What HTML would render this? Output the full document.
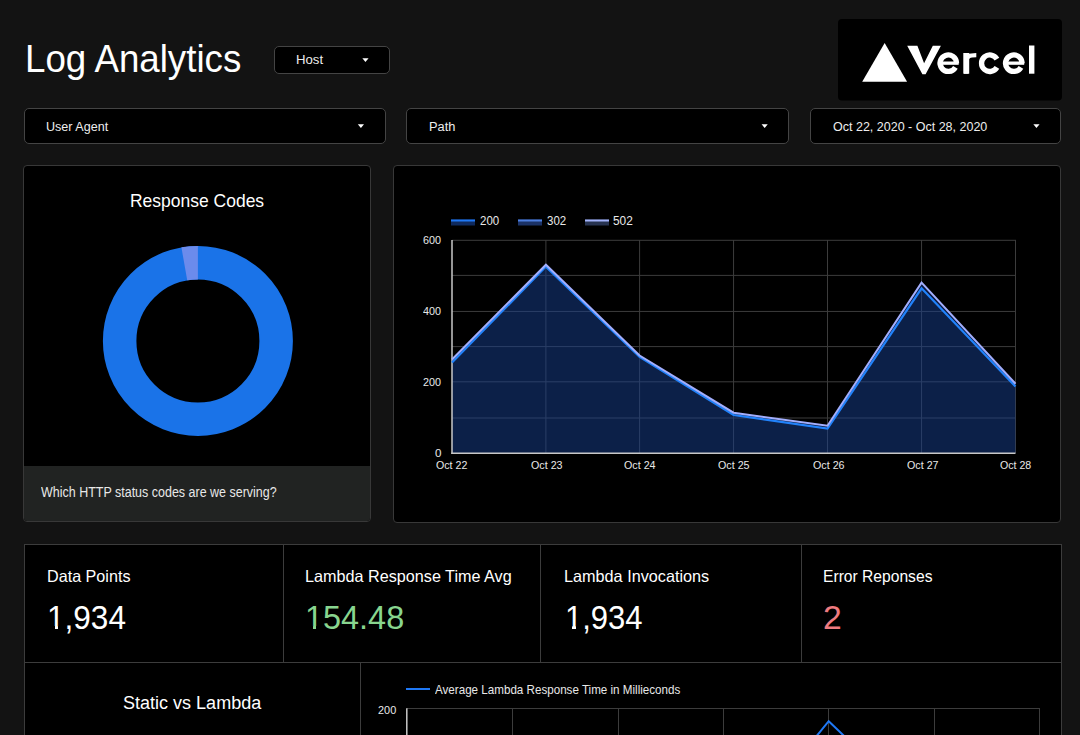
<!DOCTYPE html>
<html><head><meta charset="utf-8">
<style>
html,body{margin:0;padding:0;}
body{width:1080px;height:735px;overflow:hidden;background:#131313;position:relative;font-family:"Liberation Sans",sans-serif;color:#fff;}
.a{position:absolute;}
.t{position:absolute;white-space:nowrap;line-height:1;}
.box{position:absolute;background:#000;border:1px solid #383838;border-radius:4px;box-sizing:border-box;}
.dd{position:absolute;background:#000;border:1px solid #444;border-radius:5px;box-sizing:border-box;}
.ln{position:absolute;background:#3c3c3c;}
.arr{position:absolute;width:0;height:0;border-left:3px solid transparent;border-right:3px solid transparent;border-top:3.5px solid #fff;}
</style></head><body>
<div class="dd" style="left:274px;top:46px;width:116px;height:28px;"></div>
<svg class="a" style="left:0;top:0" width="1080" height="120" viewBox="0 0 1080 120">
<rect x="838" y="19" width="224" height="81.5" rx="4" fill="#000"/>
<polygon points="862.2,81.8 907.1,81.8 884.65,42.9" fill="#fff"/>
<polygon points="907.2,45.7 917.4,45.7 924.1,63.2 932.8,45.7 940.9,45.7 925.6,74.2 922.4,74.2" fill="#fff"/>
<g fill="none" stroke="#fff" stroke-width="5.3">
<path d="M956.55,63.20 A8.25,8.25 0 1 0 955.44,67.33"/>
<path d="M996.94,59.08 A8.25,8.25 0 1 0 996.94,67.33"/>
<path d="M1022.05,63.20 A8.25,8.25 0 1 0 1020.94,67.33"/>
<path d="M966.2,73.7 V62 C966.2,56 969.5,55.1 976.3,55.1" stroke-width="4.4"/>
</g>
<rect x="963.3" y="53" width="5.9" height="20.7" fill="#fff"/>
<rect x="937.9" y="61.5" width="20.8" height="3.3" fill="#fff"/>
<rect x="1003.4" y="61.5" width="20.8" height="3.3" fill="#fff"/>
<rect x="1029" y="45.5" width="5.4" height="28.2" fill="#fff"/>
</svg>
<div class="dd" style="left:24px;top:108px;width:362px;height:36px;"></div>
<div class="dd" style="left:406px;top:108px;width:383px;height:36px;"></div>
<div class="dd" style="left:810px;top:108px;width:251px;height:36px;"></div>
<svg class="a" style="left:0;top:0" width="1080" height="150"><polygon points="362.34999999999997,58.2 368.55,58.2 365.45,61.900000000000006" fill="#fff"/><polygon points="357.79999999999995,124.2 364.0,124.2 360.9,127.9" fill="#fff"/><polygon points="761.55,124.2 767.75,124.2 764.65,127.9" fill="#fff"/><polygon points="1033.3500000000001,124.2 1039.55,124.2 1036.45,127.9" fill="#fff"/></svg>
<div class="box" style="left:23px;top:165px;width:348px;height:357px;overflow:hidden;">
  <div class="a" style="left:0;top:300px;width:100%;height:60px;background:#212322;"></div>
</div>
<div class="box" style="left:393px;top:165px;width:668px;height:358px;"></div>
<div class="a" style="left:24px;top:544px;width:1038px;height:200px;background:#000;border:1px solid #3c3c3c;box-sizing:border-box;"></div>
<div class="ln" style="left:24px;top:662px;width:1038px;height:1px;"></div>
<div class="ln" style="left:283px;top:544px;width:1px;height:118px;"></div>
<div class="ln" style="left:540px;top:544px;width:1px;height:118px;"></div>
<div class="ln" style="left:801px;top:544px;width:1px;height:118px;"></div>
<div class="ln" style="left:360px;top:662px;width:1px;height:80px;"></div>
<svg class="a" style="left:0;top:0" width="1080" height="735" viewBox="0 0 1080 735">
<g stroke="#3c3c3c" stroke-width="1" fill="none"><line x1="452" y1="240.3" x2="1016" y2="240.3"/><line x1="452" y1="275.4" x2="1016" y2="275.4"/><line x1="452" y1="311.45" x2="1016" y2="311.45"/><line x1="452" y1="346.6" x2="1016" y2="346.6"/><line x1="452" y1="381.8" x2="1016" y2="381.8"/><line x1="452" y1="418.0" x2="1016" y2="418.0"/><line x1="545.9" y1="240" x2="545.9" y2="453"/><line x1="639.6" y1="240" x2="639.6" y2="453"/><line x1="733.55" y1="240" x2="733.55" y2="453"/><line x1="827.5" y1="240" x2="827.5" y2="453"/><line x1="921.55" y1="240" x2="921.55" y2="453"/><line x1="1015.5" y1="240" x2="1015.5" y2="453"/></g>
<polygon points="452,359.5 545.9,264.7 639.6,355.5 733.55,412.7 827.5,425.7 921.55,282.6 1015.5,383.8 1015.5,386.5 921.55,288.3 827.5,428.5 733.55,415 639.6,357 545.9,266.6 452,362.5" fill="#0a1a42" fill-opacity="0.9"/>
<polygon points="452,453 452,362.5 545.9,266.6 639.6,357 733.55,415 827.5,428.5 921.55,288.3 1015.5,386.5 1015.5,453" fill="rgb(24,64,144)" fill-opacity="0.5"/>
<g stroke="#c8c8c8" stroke-width="1.5" fill="none"><line x1="452" y1="240" x2="452" y2="454"/><line x1="451.25" y1="453.2" x2="1015.5" y2="453.2"/></g>
<polyline points="452,362.5 545.9,266.6 639.6,357 733.55,415 827.5,428.5 921.55,288.3 1015.5,386.5" fill="none" stroke="#2182fa" stroke-width="2.2"/>
<polyline points="452,359.5 545.9,264.7 639.6,355.5 733.55,412.7 827.5,425.7 921.55,282.6 1015.5,383.8" fill="none" stroke="#a2aefd" stroke-width="2"/>
<rect x="451" y="219.5" width="24" height="6" fill="#0f2a5e"/><rect x="451" y="219.5" width="24" height="2" fill="#1f78f5"/>
<rect x="518" y="219.5" width="24" height="6" fill="#1b3266"/><rect x="518" y="219.5" width="24" height="2" fill="#4d7fe0"/>
<rect x="585" y="219.5" width="24" height="6" fill="#273350"/><rect x="585" y="219.5" width="24" height="2" fill="#a4b4fb"/>
<g stroke="#3c3c3c" stroke-width="1" fill="none"><line x1="407" y1="708.5" x2="1040" y2="708.5"/><line x1="512.5" y1="708.5" x2="512.5" y2="735"/><line x1="618.5" y1="708.5" x2="618.5" y2="735"/><line x1="723.5" y1="708.5" x2="723.5" y2="735"/><line x1="828.5" y1="708.5" x2="828.5" y2="735"/><line x1="934.5" y1="708.5" x2="934.5" y2="735"/><line x1="1039.5" y1="708.5" x2="1039.5" y2="735"/></g>
<line x1="406.8" y1="708.3" x2="406.8" y2="735" stroke="#c8c8c8" stroke-width="1.5"/>
<polyline points="806,749 828.7,721.2 857.7,749" fill="none" stroke="#1f78f5" stroke-width="2"/>
<line x1="406" y1="689" x2="430" y2="689" stroke="#1f78f5" stroke-width="2"/>
<circle cx="197.9" cy="340.9" r="78.25" fill="none" stroke="#1a73e8" stroke-width="33.5"/>
<path d="M197.9,245.90 A95,95 0 0 0 181.40,247.34 L187.22,280.33 A61.5,61.5 0 0 1 197.9,279.40 Z" fill="#6b8bec"/>
</svg>
<div class="t" style="left:24.50px;top:40.25px;font-size:38.81px;letter-spacing:0.000px;transform:scaleX(0.9459);transform-origin:0 0;color:#ffffff">Log Analytics</div>
<div class="t" style="left:296.25px;top:53.28px;font-size:13.37px;letter-spacing:0.000px;transform:scaleX(0.9854);transform-origin:0 0;color:#eeeeee">Host</div>
<div class="t" style="left:46.00px;top:119.60px;font-size:13.23px;letter-spacing:0.000px;transform:scaleX(0.9501);transform-origin:0 0;color:#eeeeee">User Agent</div>
<div class="t" style="left:429.00px;top:119.60px;font-size:13.23px;letter-spacing:0.000px;transform:scaleX(0.9699);transform-origin:0 0;color:#eeeeee">Path</div>
<div class="t" style="left:832.50px;top:119.60px;font-size:13.23px;letter-spacing:0.000px;transform:scaleX(0.9460);transform-origin:0 0;color:#eeeeee">Oct 22, 2020 - Oct 28, 2020</div>
<div class="t" style="left:129.50px;top:191.80px;font-size:18.31px;letter-spacing:0.000px;transform:scaleX(0.9554);transform-origin:0 0;color:#ffffff">Response Codes</div>
<div class="t" style="left:40.50px;top:486.49px;font-size:13.95px;letter-spacing:0.000px;transform:scaleX(0.8958);transform-origin:0 0;color:#e8e8e8">Which HTTP status codes are we serving?</div>
<div class="t" style="left:46.50px;top:568.32px;font-size:16.28px;letter-spacing:0.000px;transform:scaleX(0.9928);transform-origin:0 0;color:#ffffff">Data Points</div>
<div class="t" style="left:46.50px;top:600.56px;font-size:33.72px;letter-spacing:0.000px;transform:scaleX(0.9359);transform-origin:0 0;color:#ffffff">1,934</div>
<div class="t" style="left:304.50px;top:568.32px;font-size:16.28px;letter-spacing:0.000px;transform:scaleX(0.9952);transform-origin:0 0;color:#ffffff">Lambda Response Time Avg</div>
<div class="t" style="left:305.00px;top:600.56px;font-size:33.72px;letter-spacing:0.000px;transform:scaleX(0.9617);transform-origin:0 0;color:#88d58f">154.48</div>
<div class="t" style="left:564.00px;top:568.32px;font-size:16.28px;letter-spacing:0.000px;transform:scaleX(0.9973);transform-origin:0 0;color:#ffffff">Lambda Invocations</div>
<div class="t" style="left:564.50px;top:600.56px;font-size:33.72px;letter-spacing:0.000px;transform:scaleX(0.9196);transform-origin:0 0;color:#ffffff">1,934</div>
<div class="t" style="left:823.00px;top:568.32px;font-size:16.28px;letter-spacing:0.000px;transform:scaleX(0.9608);transform-origin:0 0;color:#ffffff">Error Reponses</div>
<div class="t" style="left:823.00px;top:600.56px;font-size:33.72px;letter-spacing:0.000px;transform:scaleX(1.0000);transform-origin:0 0;color:#ef7b80">2</div>
<div class="t" style="left:123.00px;top:693.97px;font-size:18.46px;letter-spacing:0.000px;transform:scaleX(0.9773);transform-origin:0 0;color:#ffffff">Static vs Lambda</div>
<div class="t" style="left:480.00px;top:215.04px;font-size:12.35px;letter-spacing:0.000px;transform:scaleX(0.9302);transform-origin:0 0;color:#e8e8e8">200</div>
<div class="t" style="left:547.00px;top:215.04px;font-size:12.35px;letter-spacing:0.000px;transform:scaleX(0.9302);transform-origin:0 0;color:#e8e8e8">302</div>
<div class="t" style="left:613.00px;top:215.04px;font-size:12.35px;letter-spacing:0.000px;transform:scaleX(0.9612);transform-origin:0 0;color:#e8e8e8">502</div>
<div class="t" style="left:422.50px;top:233.66px;font-size:11.63px;letter-spacing:0.000px;transform:scaleX(0.9274);transform-origin:0 0;color:#e8e8e8">600</div>
<div class="t" style="left:422.50px;top:304.66px;font-size:11.63px;letter-spacing:0.000px;transform:scaleX(0.9274);transform-origin:0 0;color:#e8e8e8">400</div>
<div class="t" style="left:422.50px;top:375.66px;font-size:11.63px;letter-spacing:0.000px;transform:scaleX(0.9274);transform-origin:0 0;color:#e8e8e8">200</div>
<div class="t" style="left:435.00px;top:447.16px;font-size:11.63px;letter-spacing:0.000px;transform:scaleX(1.0000);transform-origin:0 0;color:#e8e8e8">0</div>
<div class="t" style="left:436.00px;top:458.66px;font-size:11.63px;letter-spacing:0.000px;transform:scaleX(0.9163);transform-origin:0 0;color:#e8e8e8">Oct 22</div>
<div class="t" style="left:530.50px;top:458.66px;font-size:11.63px;letter-spacing:0.000px;transform:scaleX(0.9223);transform-origin:0 0;color:#e8e8e8">Oct 23</div>
<div class="t" style="left:624.00px;top:458.66px;font-size:11.63px;letter-spacing:0.000px;transform:scaleX(0.9223);transform-origin:0 0;color:#e8e8e8">Oct 24</div>
<div class="t" style="left:717.50px;top:458.66px;font-size:11.63px;letter-spacing:0.000px;transform:scaleX(0.9223);transform-origin:0 0;color:#e8e8e8">Oct 25</div>
<div class="t" style="left:812.50px;top:458.66px;font-size:11.63px;letter-spacing:0.000px;transform:scaleX(0.9223);transform-origin:0 0;color:#e8e8e8">Oct 26</div>
<div class="t" style="left:906.50px;top:458.66px;font-size:11.63px;letter-spacing:0.000px;transform:scaleX(0.9223);transform-origin:0 0;color:#e8e8e8">Oct 27</div>
<div class="t" style="left:1000.00px;top:458.66px;font-size:11.63px;letter-spacing:0.000px;transform:scaleX(0.9118);transform-origin:0 0;color:#e8e8e8">Oct 28</div>
<div class="t" style="left:377.50px;top:703.66px;font-size:11.63px;letter-spacing:0.000px;transform:scaleX(0.9379);transform-origin:0 0;color:#e8e8e8">200</div>
<div class="t" style="left:435.00px;top:683.54px;font-size:12.35px;letter-spacing:0.000px;transform:scaleX(0.9417);transform-origin:0 0;color:#e8e8e8">Average Lambda Response Time in Millieconds</div>
<div class="a" style="left:48px;top:625.5px;width:7px;height:4px;background:#000"></div>
<div class="a" style="left:58px;top:625.5px;width:6px;height:4px;background:#000"></div>
<div class="a" style="left:306px;top:625.5px;width:7px;height:4px;background:#000"></div>
<div class="a" style="left:316px;top:625.5px;width:7px;height:4px;background:#000"></div>
<div class="a" style="left:566px;top:625.5px;width:6px;height:4px;background:#000"></div>
<div class="a" style="left:576px;top:625.5px;width:6px;height:4px;background:#000"></div>
</body></html>
